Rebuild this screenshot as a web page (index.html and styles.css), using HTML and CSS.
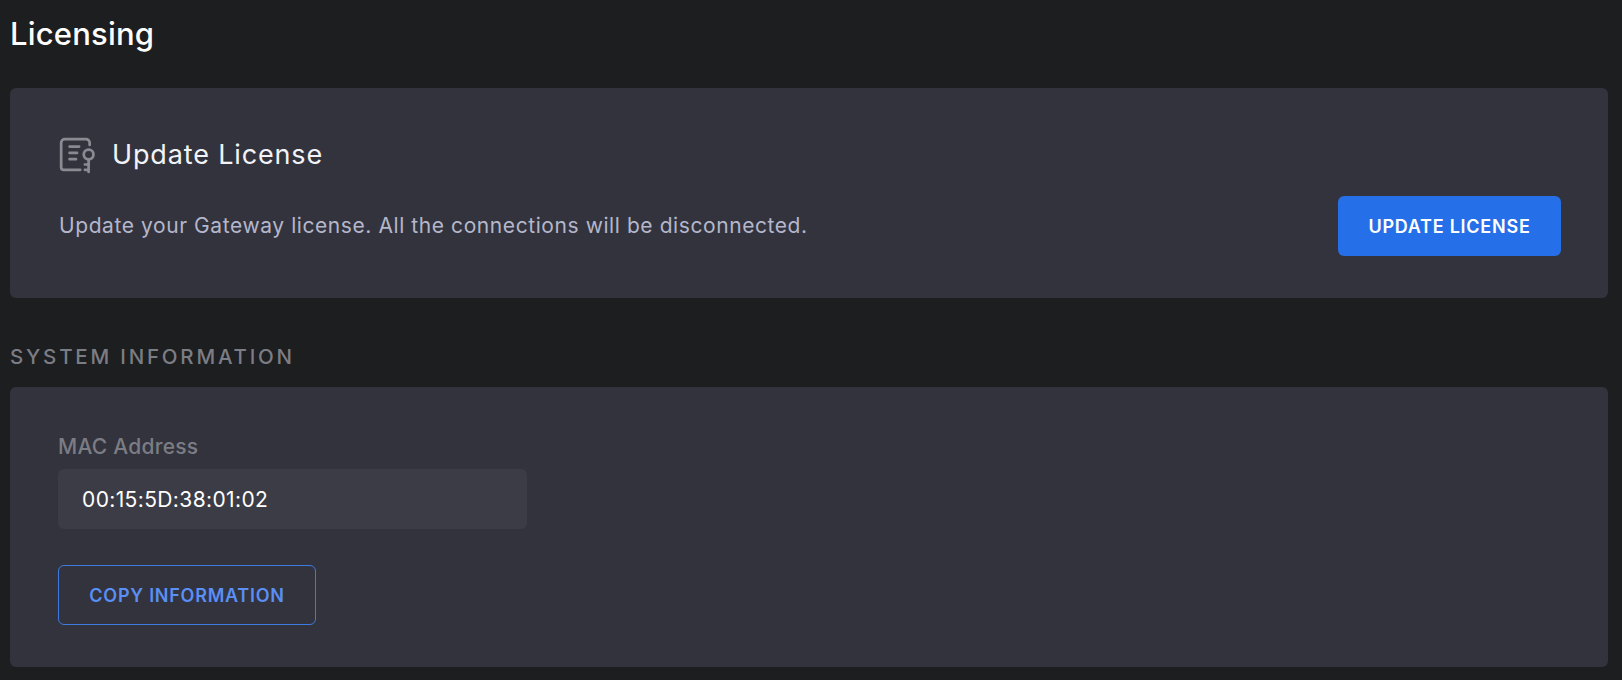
FILE: index.html
```html
<!DOCTYPE html>
<html lang="en">
  <head>
    <meta charset="UTF-8" />
    <meta name="viewport" content="width=device-width, initial-scale=1.0" />
    <title>Licensing</title>
    <link rel="stylesheet" href="styles.css">
  </head>
  <body>
    <h1 class="page-title">Licensing</h1>

    <section class="card update-card">
      <div class="update-text">
        <div class="card-head">
          <svg class="card-icon" viewBox="0 0 36 36" fill="none" stroke="#8a8b92" stroke-width="2.600" stroke-linecap="round" stroke-linejoin="round">
            <path d="M30 8.500V6.500A3.500 3.500 0 0 0 26.500 3H6.500A3.500 3.500 0 0 0 3 6.500V29.500A2.500 2.500 0 0 0 5.500 32H21" />
            <path d="M11 10H20M11 16H18M11 22H17" />
            <circle cx="29" cy="17.500" r="4.600" />
            <path d="M29 22.500V34M29 27H25.500M29 32H25.500" />
          </svg>
          <h2 class="card-title">Update License</h2>
        </div>
        <p class="card-desc">Update your Gateway license. All the connections will be disconnected.</p>
      </div>
      <button class="btn-primary">UPDATE LICENSE</button>
    </section>

    <h3 class="section-label">SYSTEM INFORMATION</h3>

    <section class="card info-card">
      <label class="field-label" for="mac">MAC Address</label>
      <div class="field-value" id="mac">00:15:5D:38:01:02</div>
      <button class="btn-outline">COPY INFORMATION</button>
    </section>
  </body>
</html>
```

FILE: styles.css
```css
body {
  margin: 0;
  padding: 0 14px 0 10px;
  background: #1d1e20;
  font-family: Inter, "Open Sans", sans-serif;
  min-height: 100vh;
  box-sizing: border-box;
}

.page-title {
  margin: 0;
  padding-top: 16px;
  height: 88px;
  box-sizing: border-box;
  font-size: 31px;
  line-height: 36px;
  font-weight: 500;
  letter-spacing: 0.2px;
  color: #ffffff;
}

.card {
  background: #33333d;
  border-radius: 6px;
}

.update-card {
  height: 210px;
  box-sizing: border-box;
  padding: 48px 47px 0 48px;
  display: flex;
  justify-content: space-between;
  align-items: flex-start;
}

.card-head {
  display: flex;
  align-items: center;
  gap: 16px;
}

.card-icon {
  width: 38px;
  height: 38px;
}

.card-title {
  margin: 0;
  font-size: 27px;
  line-height: 36px;
  font-weight: 400;
  letter-spacing: 0.85px;
  color: #f2f3f7;
}

.card-desc {
  margin: 38px 0 0;
  padding-left: 1px;
  font-size: 21px;
  line-height: 28px;
  letter-spacing: 0.58px;
  color: #b4b7cb;
}

.btn-primary {
  width: 223px;
  height: 60px;
  margin-top: 60px;
  border: none;
  border-radius: 6px;
  background: #256fe8;
  color: #ffffff;
  font-family: inherit;
  font-size: 18px;
  font-weight: 600;
  letter-spacing: 0.75px;
}

.section-label {
  margin: 0;
  height: 89px;
  box-sizing: border-box;
  padding-top: 47px;
  font-size: 20.500px;
  line-height: 24px;
  font-weight: 500;
  letter-spacing: 2.800px;
  color: #7c7d84;
}

.info-card {
  height: 280px;
  box-sizing: border-box;
  padding: 47px 48px 0;
}

.field-label {
  display: block;
  font-size: 21px;
  line-height: 26px;
  letter-spacing: 0.25px;
  font-weight: 500;
  color: #7c7d84;
}

.field-value {
  width: 469px;
  height: 60px;
  margin-top: 9px;
  padding-left: 24px;
  box-sizing: border-box;
  display: flex;
  align-items: center;
  background: #3c3c46;
  border-radius: 6px;
  font-size: 21px;
  letter-spacing: 0.38px;
  color: #ffffff;
}

.btn-outline {
  display: block;
  width: 258px;
  height: 60px;
  margin-top: 36px;
  background: transparent;
  border: 1px solid #3d7ae0;
  border-radius: 6px;
  color: #5a8ff5;
  font-family: inherit;
  font-size: 18px;
  font-weight: 600;
  letter-spacing: 0.75px;
}
```
